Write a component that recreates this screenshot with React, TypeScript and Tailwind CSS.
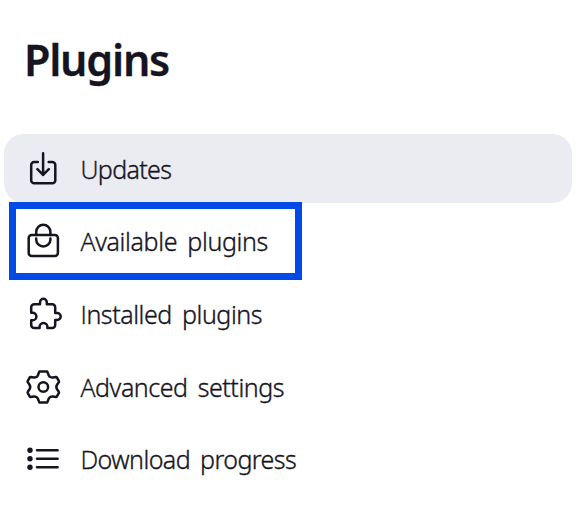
import type { ReactNode } from "react";

type Item = {
  label: string;
  spacing: string;
  icon: ReactNode;
  active?: boolean;
  highlighted?: boolean;
};

function Icon({ children }: { children: ReactNode }) {
  return (
    <svg
      className="size-[38px] shrink-0"
      viewBox="0 0 38 38"
      fill="none"
      stroke="currentColor"
      strokeWidth="2.5"
      strokeLinecap="round"
      strokeLinejoin="round"
      aria-hidden="true"
    >
      {children}
    </svg>
  );
}

const items: Item[] = [
  {
    label: "Updates",
    spacing: "tracking-[-0.65px]",
    active: true,
    icon: (
      <Icon>
        <path d="M18.1 3.2V25M12.4 19.2l5.7 5.7 5.7-5.7" />
        <path d="M12.8 12.1H9.2a3 3 0 0 0-3 3V30.2a3 3 0 0 0 3 3H27.3a3 3 0 0 0 3-3V15.1a3 3 0 0 0-3-3H23.7" />
      </Icon>
    ),
  },
  {
    label: "Available plugins",
    spacing: "tracking-[-0.35px]",
    highlighted: true,
    icon: (
      <Icon>
        <rect x="3.7" y="13" width="29.2" height="21" rx="3" />
        <path d="M11.2 13V9.9a7.1 7.1 0 0 1 14.2 0V13M11.2 16.4v1a7.1 7.1 0 0 0 14.2 0v-1" />
      </Icon>
    ),
  },
  {
    label: "Installed plugins",
    spacing: "tracking-[-0.43px]",
    icon: (
      <Icon>
        <path d="M9.2 9.3H15V7.2a3.4 3.4 0 0 1 6.8 0V9.3H27.2a3 3 0 0 1 3 3V18H32.2a3.5 3.5 0 0 1 0 7H30.2V30a3 3 0 0 1-3 3H22.4V31.8a3.9 3.9 0 0 0-7.8 0V33H9.2a3 3 0 0 1-3-3V25.3H7.6a3.8 3.8 0 0 0 0-7.6H6.2V12.3a3 3 0 0 1 3-3Z" />
      </Icon>
    ),
  },
  {
    label: "Advanced settings",
    spacing: "tracking-[-0.45px]",
    icon: (
      <Icon>
        <circle cx="18.3" cy="19" r="4.8" />
        <path d="M14.4 3.4h7.8l1.6 4.1q.5 1.2 1.8 1.7 1 .4 2.2.2l3.1-.5q.6-.1.9.4l2.1 3.9q.3.6-.1 1.1l-1.6 2.2q-1.7 2.5 0 5l1.6 2.2q.4.5.1 1.1l-2.1 3.9q-.3.5-.9.4l-3.1-.5q-1.2-.2-2.2.2-1.3.5-1.8 1.7l-1.6 4.1h-7.8l-1.6-4.1q-.5-1.2-1.8-1.7-1-.4-2.2-.2l-3.1.5q-.6.1-.9-.4l-2.1-3.9q-.3-.6.1-1.1l1.6-2.2q1.7-2.5 0-5l-1.6-2.2q-.4-.5-.1-1.1l2.1-3.9q.3-.5.9-.4l3.1.5q1.2.2 2.2-.2 1.3-.5 1.8-1.7Z" />
      </Icon>
    ),
  },
  {
    label: "Download progress",
    spacing: "tracking-[-0.57px]",
    icon: (
      <Icon>
        <path d="M12 10.2H32.6M12 18.8H32.6M12 27.2H32.6" />
        <g fill="currentColor" stroke="none">
          <circle cx="5" cy="10.2" r="2.7" />
          <circle cx="5" cy="18.8" r="2.7" />
          <circle cx="5" cy="27.2" r="2.7" />
        </g>
      </Icon>
    ),
  },
];

function MenuRow({ item }: { item: Item }) {
  return (
    <li
      className={`relative flex h-[69px] items-center gap-[17.5px] rounded-[20px] pl-[21px] ${
        item.active ? "bg-[#ebecf2]" : ""
      }`}
    >
      {item.icon}
      <span
        className={`inline-block text-[25px] leading-[34px] font-light whitespace-nowrap [-webkit-text-stroke:0.35px_#15141f] [word-spacing:4px] first-letter:font-['Open_Sans'] ${item.spacing}`}
      >
        {item.label}
      </span>
      {item.highlighted && (
        <span className="absolute -top-[5px] left-[5px] h-[78px] w-[293px] border-7 border-[#004be6]" />
      )}
    </li>
  );
}

export default function App() {
  return (
    <main className="h-[507px] w-[586px] overflow-hidden bg-white px-1 pt-[30px] font-['Noto_Sans','Open_Sans',sans-serif] text-[#15141f]">
      <h1 className="pl-[20px] text-[43px] leading-[60px] font-semibold tracking-[-1.25px] [-webkit-text-stroke:0.3px_#15141f]">
        Plugins
      </h1>
      <nav className="mt-11">
        <ul className="flex w-[568px] flex-col gap-[3.7px]">
          {items.map((item) => (
            <MenuRow key={item.label} item={item} />
          ))}
        </ul>
      </nav>
    </main>
  );
}
